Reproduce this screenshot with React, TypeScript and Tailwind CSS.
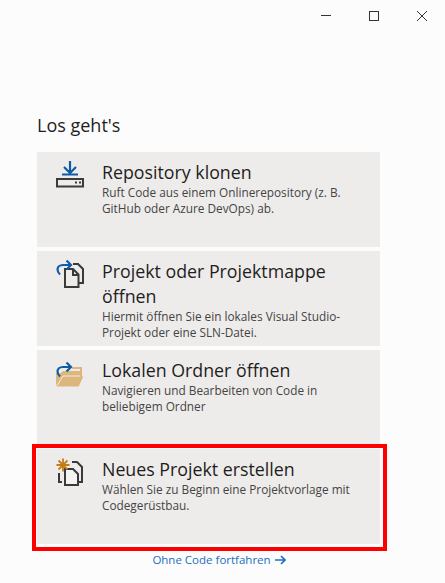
import type { ReactNode } from "react"

function CloneIcon() {
  return (
    <svg width="30" height="30" viewBox="0 0 30 30" fill="none">
      <path d="M15 1v11.500M9 7l6 6 6-6M7 14.500h16" stroke="#0e5ca8" strokeWidth="2.200" />
      <rect x="2" y="19" width="26" height="7.500" stroke="#3a3a3a" strokeWidth="2" />
      <path d="M20 22.500h2M24 22.500h2" stroke="#3a3a3a" strokeWidth="2" />
    </svg>
  )
}

function OpenArrow({ y = 0 }: { y?: number }) {
  return (
    <g transform={`translate(0 ${y})`} stroke="#0e5ca8" strokeWidth="2.200" fill="none">
      <path d="M15 6H8C4.500 6 2.500 8 2.500 10.500c0 2 1 3.500 2.500 5" />
      <path d="M11.500 1.500 16 6l-4.500 4.500" />
    </g>
  )
}

function ProjectIcon() {
  return (
    <svg width="30" height="30" viewBox="0 0 30 30" fill="none">
      <path d="M18 5h5l5 5v14h-4" stroke="#3a3a3a" strokeWidth="2" />
      <path d="M10 10h8l5.500 5.500V28H10z" fill="#eeecea" stroke="#3a3a3a" strokeWidth="2" />
      <path d="M18 10v6h5.500" stroke="#3a3a3a" strokeWidth="2" />
      <OpenArrow />
    </svg>
  )
}

function FolderIcon() {
  return (
    <svg width="30" height="30" viewBox="0 0 30 30" fill="none">
      <path d="M1 29V15h5l2-2h18v6H8z" fill="#dcb67a" />
      <path d="M8 18h21l-5 11H1z" fill="#dcb67a" stroke="#eeecea" strokeWidth="1" />
      <path d="M17 10h9v9" stroke="#dcb67a" strokeWidth="2" />
      <OpenArrow y={3} />
    </svg>
  )
}

function NewProjectIcon() {
  return (
    <svg width="30" height="30" viewBox="0 0 30 30" fill="none">
      <path d="M17 5h5l5 5v15h-3" stroke="#3a3a3a" strokeWidth="2" />
      <path d="M10 12h8l5 5v11H10z" fill="#f4f3f1" stroke="#3a3a3a" strokeWidth="2" />
      <path d="M4 16v9h3" stroke="#3a3a3a" strokeWidth="2" />
      <path d="M8 1.500v13M1.500 8h13M3.500 3.500l9 9M12.500 3.500l-9 9" stroke="#c27d1a" strokeWidth="1.800" />
    </svg>
  )
}

function Card({ icon, title, text, children }: { icon: ReactNode; title: ReactNode; text: ReactNode; children?: ReactNode }) {
  return (
    <div className="relative flex h-[95px] bg-[#eeecea] pl-[18px] pt-[8px]">
      <div className="w-[47px] shrink-0">{icon}</div>
      <div>
        <h3 className="text-[17.800px] leading-[25px] text-[#1e1e1e]">{title}</h3>
        <p className="-mt-[1px] w-[262px] text-[11.800px] leading-[16px] text-[#444444]">{text}</p>
      </div>
      {children}
    </div>
  )
}

export default function App() {
  return (
    <div className="h-[583px] w-[445px] overflow-hidden bg-[#fcfcfc] font-['Open_Sans',sans-serif]">
      <div className="flex h-[30px] justify-end">
        <svg width="130" height="30" viewBox="0 0 130 30" fill="none" stroke="#333333">
          <path d="M6 15.500h10" />
          <rect x="54.500" y="11.500" width="9" height="9" />
          <path d="M102 11l10 10M112 11l-10 10" />
        </svg>
      </div>
      <div className="px-[37px] pt-[82px]">
        <h2 className="text-[18px] leading-[26px] text-[#1e1e1e]">Los geht's</h2>
        <div className="mt-[14px] flex w-[343px] flex-col gap-[4px]">
          <Card
            icon={<CloneIcon />}
            title="Repository klonen"
            text="Ruft Code aus einem Onlinerepository (z. B. GitHub oder Azure DevOps) ab."
          />
          <Card
            icon={<ProjectIcon />}
            title="Projekt oder Projektmappe öffnen"
            text="Hiermit öffnen Sie ein lokales Visual Studio-Projekt oder eine SLN-Datei."
          />
          <Card
            icon={<FolderIcon />}
            title="Lokalen Ordner öffnen"
            text="Navigieren und Bearbeiten von Code in beliebigem Ordner"
          />
          <Card
            icon={<NewProjectIcon />}
            title="Neues Projekt erstellen"
            text="Wählen Sie zu Beginn eine Projektvorlage mit Codegerüstbau."
          >
            <div className="absolute -left-[5px] -top-[5px] h-[107px] w-[355px] border-[4px] border-[#ff0000]" />
          </Card>
        </div>
        <div className="mt-[8px] flex w-[364px] items-center justify-center gap-[4px] text-[11.500px] leading-[16px] text-[#1b6ec2]">
          <span>Ohne Code fortfahren</span>
          <svg width="11" height="10" viewBox="0 0 11 10" fill="none" stroke="#1b6ec2" strokeWidth="1.600">
            <path d="M0 5h10M6 1l4 4-4 4" />
          </svg>
        </div>
      </div>
    </div>
  )
}
